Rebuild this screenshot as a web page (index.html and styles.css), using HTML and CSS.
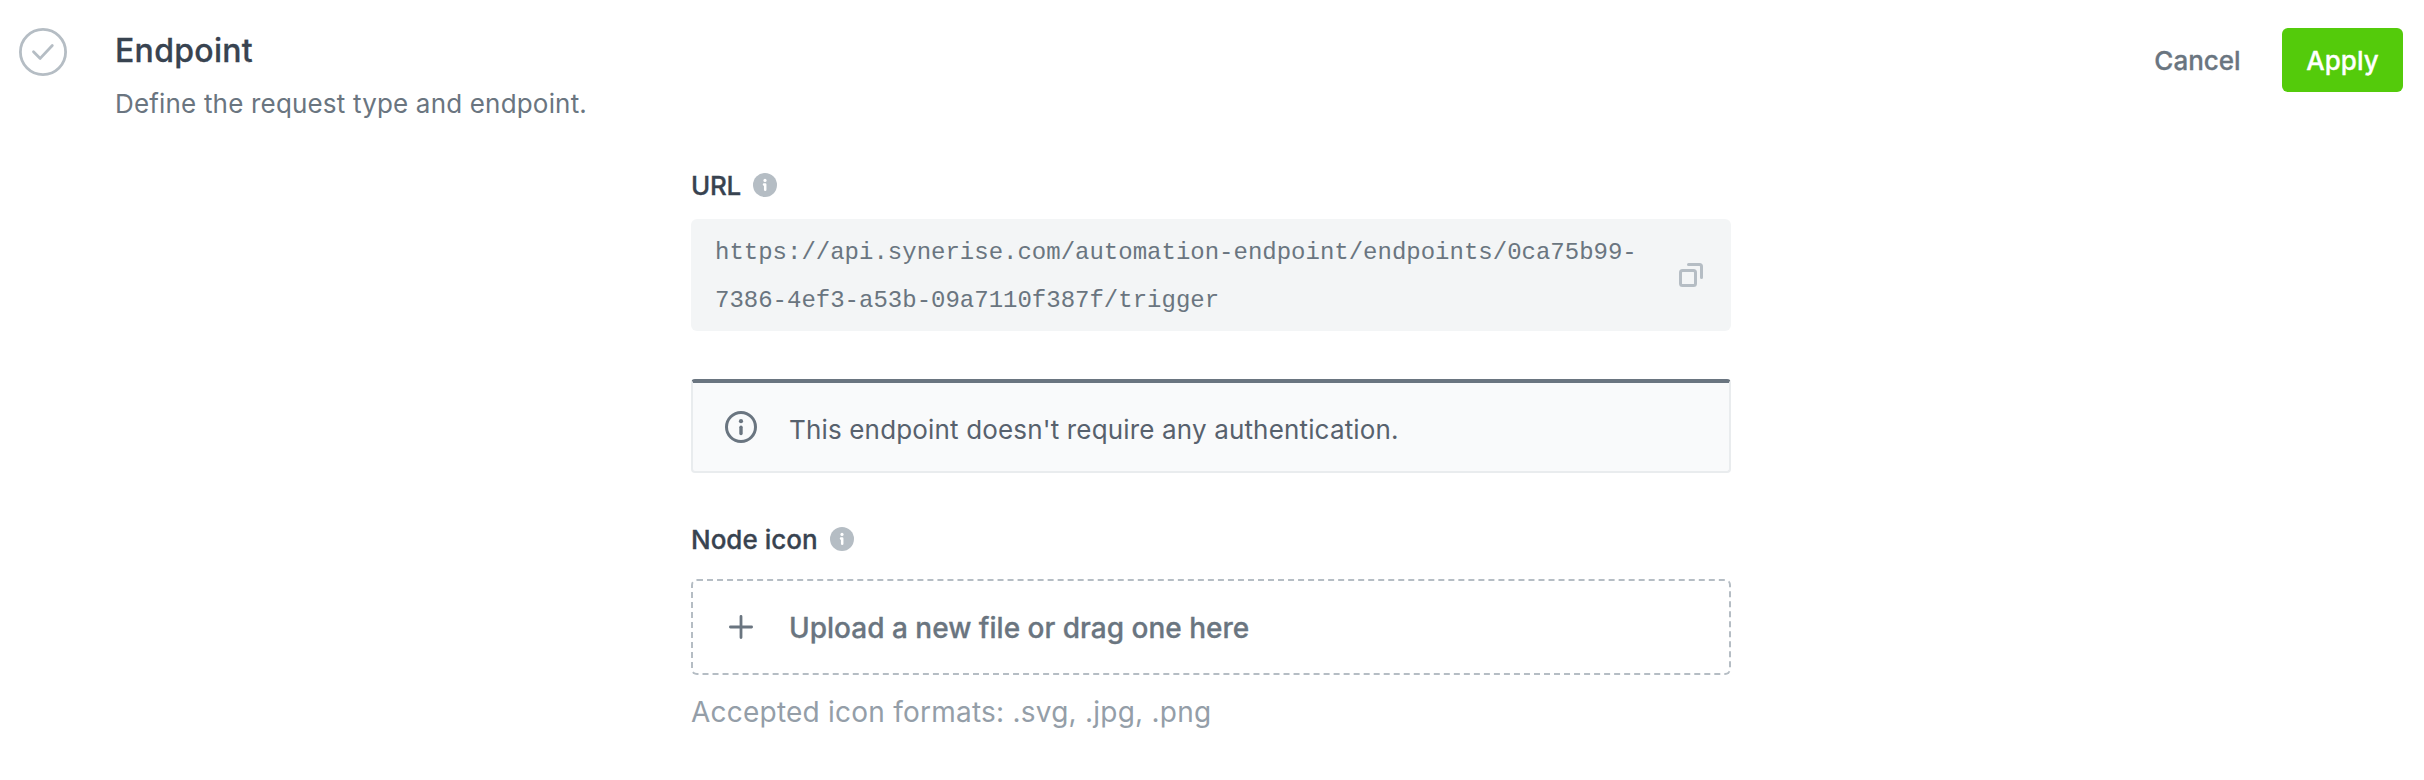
FILE: index.html
```html
<!DOCTYPE html>
<html lang="en">
<head>
<meta charset="utf-8">
<title>Endpoint</title>
<link rel="stylesheet" href="styles.css">
</head>
<body>
<header class="header">
  <svg class="status" viewBox="0 0 48 48" fill="none" stroke="#b5bdc4"><circle cx="24" cy="24" r="22.6" stroke-width="2.8"/><path d="M14.500 23.700l6.700 6.700L33.300 17.500" stroke-width="2.800" stroke-linecap="round" stroke-linejoin="round"/></svg>
  <div class="heading">
    <h1 class="title">Endpoint</h1>
    <p class="subtitle">Define the request type and endpoint.</p>
  </div>
  <div class="actions">
    <button class="btn cancel">Cancel</button>
    <button class="btn apply">Apply</button>
  </div>
</header>
<main class="form">
  <div class="label"><span class="label-url">URL</span>
    <svg class="hint" viewBox="0 0 24 24"><circle cx="12" cy="12" r="12" fill="#b5bdc4"/><circle cx="12" cy="7.400" r="1.600" fill="#fff"/><path d="M11 11.500h1.200v5.300" fill="none" stroke="#fff" stroke-width="2.500" stroke-linecap="round" stroke-linejoin="round"/></svg>
  </div>
  <div class="url-box">
    <code class="url-text">https://api.synerise.com/automation-endpoint/endpoints/0ca75b99-<br>7386-4ef3-a53b-09a7110f387f/trigger</code>
    <svg class="copy" viewBox="0 0 24 24" fill="none" stroke="#b5bdc4" stroke-width="3"><rect x="1.500" y="7.500" width="15" height="15" rx="2"/><path d="M9.500 1.500H20.500a2 2 0 0 1 2 2V14.500" stroke-linecap="round"/></svg>
  </div>
  <div class="notice">
    <svg class="notice-icon" viewBox="0 0 32 32" fill="none" stroke="#6a7580"><circle cx="16" cy="16" r="14.500" stroke-width="3"/><circle cx="16" cy="10.200" r="2.100" fill="#6a7580" stroke="none"/><path d="M16 16.300v6.200" stroke-width="3.400" stroke-linecap="round"/></svg>
    <span class="notice-text">This endpoint doesn't require any authentication.</span>
  </div>
  <div class="label label-node"><span>Node icon</span>
    <svg class="hint" viewBox="0 0 24 24"><circle cx="12" cy="12" r="12" fill="#b5bdc4"/><circle cx="12" cy="7.400" r="1.600" fill="#fff"/><path d="M11 11.500h1.200v5.300" fill="none" stroke="#fff" stroke-width="2.500" stroke-linecap="round" stroke-linejoin="round"/></svg>
  </div>
  <div class="upload">
    <svg class="plus" viewBox="0 0 24 24" fill="none" stroke="#6a7580" stroke-width="2.800" stroke-linecap="round"><path d="M12 1.400v21.200M1.400 12h21.200"/></svg>
    <span class="upload-text">Upload a new file or drag one here</span>
  </div>
  <p class="formats">Accepted icon formats: .svg, .jpg, .png</p>
</main>
</body>
</html>
```

FILE: styles.css
```css
* { box-sizing: border-box; }
body { margin: 0; background: #fff; color: #384350; font-family: Inter, "Liberation Sans", sans-serif; font-size: 26px; }
h1, p { margin: 0; }
svg { display: block; flex: none; }
.header { display: flex; align-items: flex-start; height: 170px; padding: 28px 21px 0 19px; }
.status { width: 48px; height: 48px; }
.heading { margin-left: 48px; flex: 1; }
.title { font-size: 32px; font-weight: 500; line-height: 46px; letter-spacing: 0.3px; -webkit-text-stroke: 0.3px currentColor; }
.subtitle { margin-top: 8px; line-height: 44px; letter-spacing: 0.18px; color: #6a7580; }
.actions { display: flex; }
.btn { height: 64px; border: 0; border-radius: 6px; padding: 2px 0 0; font: 500 26px/62px Inter, "Liberation Sans", sans-serif; -webkit-text-stroke: 0.3px currentColor; }
.cancel { background: none; color: #6a7580; width: 133px; margin-right: 18px; }
.apply { background: #54cb0b; color: #fff; width: 121px; }
.form { width: 1040px; margin-left: 691px; }
.label { display: flex; align-items: center; gap: 12px; height: 30px; font-weight: 500; -webkit-text-stroke: 0.3px currentColor; }
.label > span { padding-top: 1px; }
.label-url { letter-spacing: -0.3px; }
.hint { width: 24px; height: 24px; -webkit-text-stroke: 0; }
.url-box { display: flex; align-items: center; justify-content: space-between; height: 112px; margin-top: 19px; padding: 0 28px 0 24px; background: #f3f5f6; border-radius: 6px; }
.url-text { padding-top: 4px; font: 24px/48px "Liberation Mono", monospace; color: #6a7580; }
.copy { width: 24px; height: 24px; }
.notice { display: flex; align-items: center; height: 94px; margin-top: 48px; padding: 0 32px; gap: 32px; background: #f9fafb; border: 2px solid #e9ecee; border-top: 4px solid #6a7580; border-radius: 4px; color: #57616d; }
.notice-icon { width: 32px; height: 32px; }
.notice-text { padding-top: 4px; letter-spacing: 0.16px; }
.label-node { margin-top: 51px; }
.upload { display: flex; align-items: center; height: 96px; margin-top: 25px; padding: 0 36px; gap: 36px; border: 2px dashed #b5bdc4; border-radius: 6px; font-size: 28px; font-weight: 500; color: #6a7580; -webkit-text-stroke: 0.3px currentColor; }
.plus { width: 24px; height: 24px; }
.upload-text { padding-top: 2px; }
.formats { margin-top: 17px; font-size: 28px; line-height: 40px; letter-spacing: 0.23px; color: #949ea8; }
```
